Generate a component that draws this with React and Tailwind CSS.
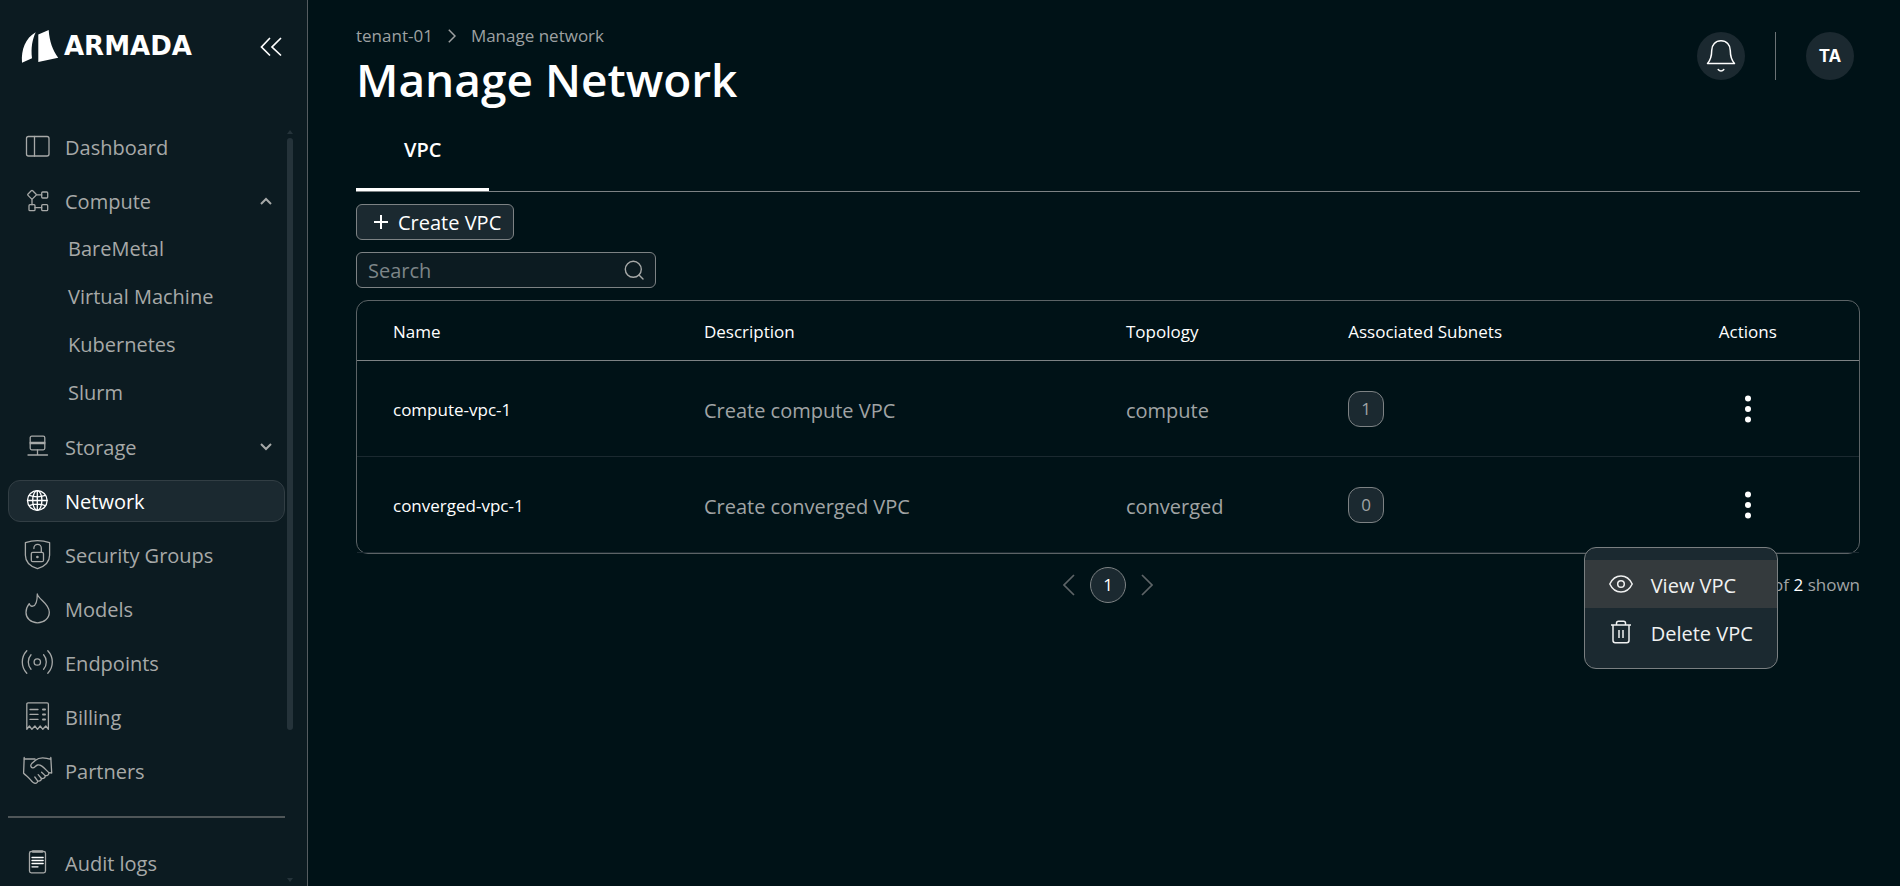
import React, { useState } from "react";

// Icons
const iconPaths = {
  dashboard: (
    <>
      <rect x="5.5" y="5.5" width="22.5" height="19.5" rx="2" />
      <path d="M13.5 5.5v19.5" />
    </>
  ),
  compute: (
    <>
      <rect x="7.7" y="6.4" width="6.6" height="6.6" rx="1" transform="rotate(45 11 9.7)" />
      <rect x="20.7" y="7" width="6" height="6" rx="1" />
      <rect x="8" y="19.7" width="6" height="6" rx="1" />
      <rect x="20.7" y="19.7" width="6" height="6" rx="1" />
      <path d="M15.7 9.9h5M11 14.4v5.3M14 22.7h6.7" />
    </>
  ),
  storage: (
    <>
      <rect x="9.2" y="5.2" width="14.6" height="13.6" rx="1.5" />
      <path d="M9.2 11.4h14.6M9.2 12.7h14.6M16.5 18.8v5M7 24h19.5" />
    </>
  ),
  network: (
    <>
      <circle cx="16.3" cy="15.5" r="9.8" />
      <ellipse cx="16.3" cy="15.5" rx="4.6" ry="9.8" />
      <path d="M6.5 15.5h19.6M16.3 5.7v19.6M8.2 10.4c5 1.7 11.2 1.7 16.2 0M8.2 20.6c5-1.7 11.2-1.7 16.2 0" />
    </>
  ),
  security: (
    <>
      <path d="M16.5 1.7c4 0 8.2.7 12.1 2v12.5c0 6.3-5 11.2-12.1 13.5C9.4 27.4 4.4 22.5 4.4 16.2V3.7c3.9-1.3 8.1-2 12.1-2z" />
      <rect x="10.3" y="13.3" width="12.2" height="9.4" rx="1.5" />
      <path d="M12.9 9.5V9a3.700 3.700 0 0 1 7.400 0v4.300" />
      <circle cx="16.4" cy="18" r="0.7" />
    </>
  ),
  models: (
    <path d="M16.3 1c1 5.6 12 9.3 12 18.3 0 6-5.2 10.5-11.8 10.5S5 25.3 5 19.5c0-3.6 1.3-6.5 3.2-8.9.6 1.8 2 2.900 3.600 2.600 3-.6 4.500-4.200 4.500-12.200z" />
  ),
  endpoints: (
    <>
      <circle cx="16.3" cy="15" r="3.2" />
      <path d="M10 7.8c-3.6 4-3.6 10.4 0 14.4M22.600 7.800c3.600 4 3.600 10.400 0 14.400M5.800 3.700c-6 6.300-6 16.300 0 22.600M26.800 3.700c6 6.300 6 16.300 0 22.600" />
    </>
  ),
  billing: (
    <>
      <path d="M5.8 28.3V3.2c0-.8.5-1.3 1.3-1.3h19c.8 0 1.3.5 1.3 1.3v25.1l-2.600-3.300-3 3.300-2.600-3.300-2.700 3.300-2.600-3.300-3 3.300-2.500-3.300z" />
      <path d="M9 8.5h8M9 13.4h8M9 18.4h8" />
      <path strokeWidth="2" d="M22 8.5h2M22 13.4h2M22 18.4h2" />
    </>
  ),
  partners: (
    <>
      <path d="M3.2 2.5 2.6 18.200c2.400 2.400 4.600 3.800 7 6.600 1.400 1.800 2.800 3.500 4.600 3.500 1.500 0 2.500-.9 2.400-2.500 2 .7 3.900-.3 3.800-2.300 2.200.5 4-.9 3.800-2.900 2.200.2 4-1 3.600-3M27.800 17.600l2.900.4L29.800 2.500" />
      <path d="M3.200 4H14M29.700 4c-3 .2-4.500-1.200-8-1.200-3.200 0-5.200.6-7.200 2.500L10.700 8.600c-1.600 1.600-.9 4 .9 4.300 2.200.3 2.900-2.600 5-2.900 3.800-.5 5.800 2.300 11.200 7.600M13.800 22l2.800 3.800M17.200 19.700l3.200 3.800M20.600 17.200l3.600 3.400" />
    </>
  ),
  audit: (
    <>
      <rect x="8.5" y="4.5" width="16" height="21.3" rx="1.8" />
      <path strokeWidth="2.5" d="M12 4.5h9" />
      <path className="stroke-white" d="M11 10.500h11.200M11 13.500h11.200M11 16.500h11.200M11 19.800h6" />
    </>
  ),
};

function NavIcon({ name }) {
  return (
    <svg
      className="w-8 h-8 shrink-0"
      viewBox="0 0 32 32"
      fill="none"
      stroke="currentColor"
      strokeWidth="1.3"
      strokeLinecap="round"
      strokeLinejoin="round"
      aria-hidden="true"
    >
      {iconPaths[name]}
    </svg>
  );
}

function Chevron({ open }) {
  return (
    <svg className="w-3 h-3 ml-auto" viewBox="0 0 12 12" fill="none" stroke="currentColor" strokeWidth="2" aria-hidden="true">
      <path d={open ? "M1 9l5-5 5 5" : "M1 3l5 5 5-5"} />
    </svg>
  );
}

const navItems = [
  { label: "Dashboard", icon: "dashboard" },
  {
    label: "Compute",
    icon: "compute",
    open: true,
    children: ["BareMetal", "Virtual Machine", "Kubernetes", "Slurm"],
  },
  { label: "Storage", icon: "storage", children: [] },
  { label: "Network", icon: "network", active: true },
  { label: "Security Groups", icon: "security" },
  { label: "Models", icon: "models" },
  { label: "Endpoints", icon: "endpoints" },
  { label: "Billing", icon: "billing" },
  { label: "Partners", icon: "partners" },
];

const vpcs = [
  { name: "compute-vpc-1", description: "Create compute VPC", topology: "compute", subnets: 1 },
  { name: "converged-vpc-1", description: "Create converged VPC", topology: "converged", subnets: 0 },
];

const navClass = "flex items-center gap-3 w-full h-[42px] pl-3 pr-3 rounded-xl border text-[20px]";

function NavItem({ item }) {
  if (item.children) {
    return (
      <li>
        <button type="button" aria-expanded={!!item.open} className={`${navClass} border-transparent`}>
          <NavIcon name={item.icon} />
          <span className="pt-0.5">{item.label}</span>
          <Chevron open={item.open} />
        </button>
        {item.open && (
          <ul>
            {item.children.map((child) => (
              <li key={child}>
                <a href="#" className="flex items-center h-12 pt-1.5 pl-[60px] text-[20px]">
                  {child}
                </a>
              </li>
            ))}
          </ul>
        )}
      </li>
    );
  }

  return (
    <li>
      <a
        href="#"
        className={`${navClass} ${
          item.active ? "bg-[#1b2930] border-[#323e44] text-white" : "border-transparent"
        }`}
      >
        <NavIcon name={item.icon} />
        <span className="pt-0.5">{item.label}</span>
      </a>
    </li>
  );
}

function Sidebar() {
  return (
    <aside className="flex flex-col w-[308px] h-screen shrink-0 bg-[#0c1b21] border-r border-[#555c60] text-[#a7a9a8] overflow-hidden">
      <div className="flex items-start h-[126px] shrink-0 pt-7 pl-5 pr-[25px]">
        <a href="#" className="flex items-center text-white">
          <svg className="w-10 h-9 mr-1" viewBox="0 0 40 36" fill="currentColor" aria-hidden="true">
            <path d="M15.7 4.3C5.5 10 1 21.5 2 34.8l10-4.500C10.800 20 12.300 11.500 15.700 4.300z" />
            <path d="M18.3 6.6 28.7 2c.8 11.500 3.800 20 9.500 27.700l-19.900 4.300z" />
          </svg>
          <span className="font-['DejaVu_Sans'] font-bold text-[26px] leading-9">ARMADA</span>
        </a>
        <button type="button" aria-label="Collapse menu" className="ml-auto mt-2 text-white">
          <svg className="w-[22px] h-5" viewBox="0 0 22 20" fill="none" stroke="currentColor" strokeWidth="1.7" strokeLinecap="round">
            <path d="M9.500 2.500 1.500 11l8 8M20.500 2.500l-8.500 8.500 8.500 8" />
          </svg>
        </button>
      </div>

      <div className="flex flex-1 min-h-0 pl-2 gap-0.5">
        <nav className="w-[277px] overflow-hidden">
          <ul className="flex flex-col gap-3">
            {navItems.map((item) => (
              <NavItem key={item.label} item={item} />
            ))}
          </ul>
          <hr className="my-6 border-t-2 border-[#4f5658]" />
          <a href="#" className={`${navClass} border-transparent`}>
            <NavIcon name="audit" />
            <span className="pt-0.5">Audit logs</span>
          </a>
        </nav>

        {/* Scroll track */}
        <div className="flex flex-col items-center w-1.5 pt-1 pb-1 text-[#25333a]" aria-hidden="true">
          <svg className="w-1.5 h-1" viewBox="0 0 6 4" fill="currentColor">
            <path d="M3 0l3 4H0z" />
          </svg>
          <div className="flex-4 w-full mt-1 rounded-full bg-[#25333a]" />
          <div className="flex-1" />
          <svg className="w-1.5 h-1" viewBox="0 0 6 4" fill="currentColor">
            <path d="M0 0h6L3 4z" />
          </svg>
        </div>
      </div>
    </aside>
  );
}

function RowMenu() {
  return (
    <div
      role="menu"
      className="absolute right-0 top-full mt-6 z-10 py-3 rounded-xl border border-[#7a7f81] bg-[#1b2930] text-[20px] text-[#f0f1f1] whitespace-nowrap"
    >
      <button type="button" role="menuitem" className="flex items-center gap-[18px] w-full h-12 px-6 bg-[#343a3d]">
        <svg className="w-6 h-6" viewBox="0 0 24 24" fill="none" stroke="currentColor" strokeWidth="1.5" aria-hidden="true">
          <path d="M.8 12C3.5 6.3 7.3 4 12 4s8.500 2.300 11.200 8c-2.700 5.700-6.500 8-11.200 8S3.500 17.700.8 12z" />
          <circle cx="12" cy="12" r="3.3" />
        </svg>
        <span className="pt-1">View VPC</span>
      </button>
      <button type="button" role="menuitem" className="flex items-center gap-[18px] w-full h-12 px-6">
        <svg className="w-6 h-6" viewBox="0 0 24 24" fill="none" stroke="currentColor" strokeWidth="1.5" strokeLinejoin="round" aria-hidden="true">
          <path d="M2 5h20M4 5v15.500c0 1.400.8 2.200 2.200 2.200h11.600c1.400 0 2.200-.8 2.200-2.200V5M7.500 5V3.200c0-1.200.8-2 2-2h5c1.200 0 2 .8 2 2V5M10 10v8M14 10v8" />
        </svg>
        <span className="pt-1">Delete VPC</span>
      </button>
    </div>
  );
}

function VpcTable({ rows, openRow, onToggle }) {
  return (
    <div className="rounded-xl border border-[#5c6366]">
      <table className="w-full table-fixed border-separate border-spacing-0 text-left">
        <thead>
          <tr className="h-[60px] text-[17px] text-white">
            <th className="w-[20.7%] px-9 pt-0.5 font-normal border-b border-[#7d8284]">Name</th>
            <th className="w-[28.1%] px-9 pt-0.5 font-normal border-b border-[#7d8284]">Description</th>
            <th className="w-[14.8%] px-9 pt-0.5 font-normal border-b border-[#7d8284]">Topology</th>
            <th className="w-[21.6%] px-9 pt-0.5 font-normal border-b border-[#7d8284]">Associated Subnets</th>
            <th className="px-9 pt-0.5 font-normal border-b border-[#7d8284] text-center">Actions</th>
          </tr>
        </thead>
        <tbody>
          {rows.map((vpc) => (
            <tr key={vpc.name} className="h-24 text-[20px] text-[#a0a4a5]">
              <td className="px-9 pt-0.5 border-b border-[#1b2930] text-[17px] text-white">{vpc.name}</td>
              <td className="px-9 pt-1 border-b border-[#1b2930]">{vpc.description}</td>
              <td className="px-9 pt-1 border-b border-[#1b2930]">{vpc.topology}</td>
              <td className="px-9 border-b border-[#1b2930]">
                <span className="flex items-center justify-center w-9 h-9 rounded-xl border border-[#7d8284] bg-[#1b2930] text-[17px]">
                  {vpc.subnets}
                </span>
              </td>
              <td className="border-b border-[#1b2930]">
                <div className="relative w-[60px] h-9 mx-auto">
                  <button
                    type="button"
                    aria-label={`Actions for ${vpc.name}`}
                    onClick={() => onToggle(vpc.name)}
                    className="flex items-center justify-center w-full h-full text-white"
                  >
                    <svg className="w-2 h-7" viewBox="0 0 8 28" fill="currentColor">
                      <circle cx="4" cy="3.5" r="3" />
                      <circle cx="4" cy="14" r="3" />
                      <circle cx="4" cy="24.5" r="3" />
                    </svg>
                  </button>
                  {openRow === vpc.name && <RowMenu />}
                </div>
              </td>
            </tr>
          ))}
        </tbody>
      </table>
    </div>
  );
}

function App() {
  const [search, setSearch] = useState("");
  const [openRow, setOpenRow] = useState("converged-vpc-1");

  const rows = vpcs.filter((vpc) => vpc.name.includes(search.toLowerCase()));
  const toggleRow = (name) => setOpenRow(openRow === name ? null : name);

  return (
    <div className="flex min-h-screen bg-[#001217] font-['Open_Sans',sans-serif]">
      <Sidebar />

      <main className="flex-1 min-w-0 pl-12 pr-10 pt-6">
        {/* Header */}
        <header className="flex justify-between">
          <div>
            <nav aria-label="Breadcrumb" className="flex items-center gap-[15px] h-6 text-[17px] text-[#9da1a2]">
              <a href="#">tenant-01</a>
              <svg className="w-2 h-3.5" viewBox="0 0 8 14" fill="none" stroke="currentColor" strokeWidth="1.5" aria-hidden="true">
                <path d="M.8.8 7 7l-6.200 6.200" />
              </svg>
              <span>Manage network</span>
            </nav>
            <h1 className="pb-0.5 text-[46px] leading-[62px] font-semibold text-white">Manage Network</h1>
          </div>

          <div className="flex items-center gap-[30px] h-12 mt-2 pr-1.5">
            <button type="button" aria-label="Notifications" className="flex items-center justify-center w-12 h-12 rounded-full bg-[#1b2930] text-white">
              <svg className="w-8 h-8" viewBox="0 0 32 32" fill="none" stroke="currentColor" strokeWidth="1.5" strokeLinecap="round" strokeLinejoin="round">
                <path d="M2.500 23.500C6 19.500 6.700 16 6.700 10.500 6.700 4.800 10.500.8 16 .8s9.300 4 9.300 9.700c0 5.500.7 9 4.200 13zM13.200 29.500c1.500 2 4.100 2 5.600 0" />
              </svg>
            </button>
            <div className="w-px h-12 bg-[#6b7275]" />
            <button type="button" className="w-12 h-12 pt-0.5 rounded-full bg-[#1b2930] text-white font-['Inter'] font-bold text-[17px]">
              TA
            </button>
          </div>
        </header>

        {/* Tabs */}
        <div role="tablist" className="flex border-b border-[#7d8284]">
          <button
            type="button"
            role="tab"
            aria-selected="true"
            className="h-[79px] px-12 border-b-3 border-white text-[20px] font-semibold text-white"
          >
            VPC
          </button>
        </div>

        <div className="flex flex-col items-start gap-3 pt-3 pb-3">
          <button
            type="button"
            className="flex items-center gap-2.5 h-9 pl-[17px] pr-3 rounded-md border border-[#7d8284] bg-[#1b2930] text-[20px] text-white"
          >
            <svg className="w-3.5 h-3.5" viewBox="0 0 14 14" fill="none" stroke="currentColor" strokeWidth="2" aria-hidden="true">
              <path d="M7 0v14M0 7h14" />
            </svg>
            <span className="pt-0.5">Create VPC</span>
          </button>

          <div className="flex items-center w-[300px] h-9 px-[11px] rounded-md border border-[#7d8284] bg-[#0c1b21] text-[#a7a9a8]">
            <input
              type="text"
              aria-label="Search"
              placeholder="Search"
              value={search}
              onChange={(e) => setSearch(e.target.value)}
              className="flex-1 min-w-0 pt-0.5 bg-transparent outline-none text-[20px] placeholder:text-[#7d8588]"
            />
            <svg className="w-5 h-5" viewBox="0 0 20 20" fill="none" stroke="currentColor" strokeWidth="1.4" strokeLinecap="round" aria-hidden="true">
              <circle cx="9.300" cy="9.300" r="8" />
              <path d="M15 15l4 4" />
            </svg>
          </div>
        </div>

        <VpcTable rows={rows} openRow={openRow} onToggle={toggleRow} />

        {/* Pagination */}
        <div className="grid grid-cols-[1fr_auto_1fr] items-center mt-[13px] text-[17px] text-[#a0a4a5]">
          <div />
          <div className="flex items-center gap-[15px]">
            <button type="button" aria-label="Previous page" className="text-[#5d6467]">
              <svg className="w-3 h-[22px]" viewBox="0 0 12 22" fill="none" stroke="currentColor" strokeWidth="1.7">
                <path d="M11 1 1 11l10 10" />
              </svg>
            </button>
            <button type="button" aria-current="page" className="w-9 h-9 rounded-full border border-[#7d8284] bg-[#1b2930] text-white">
              1
            </button>
            <button type="button" aria-label="Next page" className="text-[#5d6467]">
              <svg className="w-3 h-[22px]" viewBox="0 0 12 22" fill="none" stroke="currentColor" strokeWidth="1.7">
                <path d="M1 1l10 10L1 21" />
              </svg>
            </button>
          </div>
          <p className="text-right">
            of <span className="text-white">2</span> shown
          </p>
        </div>
      </main>
    </div>
  );
}

export default App;
